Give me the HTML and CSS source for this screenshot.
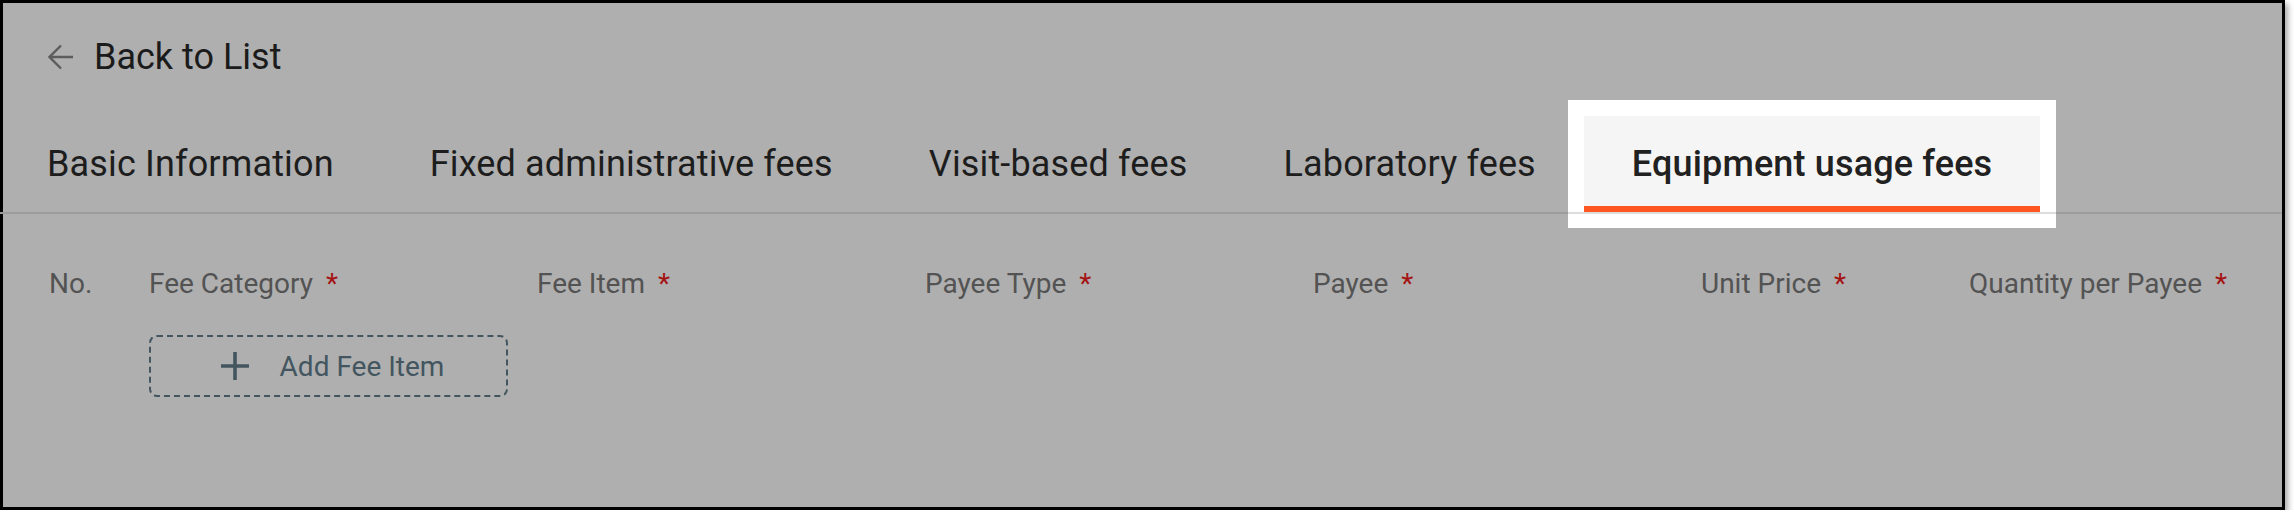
FILE: index.html
```html
<!DOCTYPE html>
<html lang="en"><head><meta charset="utf-8">
    <title>Edit project – Equipment usage fees</title>
    <link rel="stylesheet" href="styles.css">
    </head><body>
    <div class="frame">
        <a class="back-link" href="#">
            <svg class="back-icon" width="26" height="26" viewBox="0 0 26 26" aria-hidden="true">
                <path d="M25 13H2 M13 1.5L1.5 13L13 24.5" fill="none" stroke="currentColor" stroke-width="2.4"/>
            </svg>
            <span>Back to List</span>
        </a>
        <div class="tabs" role="tablist">
            <div class="tab" role="tab">Basic Information</div>
            <div class="tab" role="tab">Fixed administrative fees</div>
            <div class="tab" role="tab">Visit-based fees</div>
            <div class="tab" role="tab">Laboratory fees</div>
            <div class="tab active" role="tab" aria-selected="true">Equipment usage fees</div>
        </div>
        <div class="fee-table">
            <div class="col-label">No.</div>
            <div class="col-label">Fee Category <span class="req">*</span></div>
            <div class="col-label">Fee Item <span class="req">*</span></div>
            <div class="col-label">Payee Type <span class="req">*</span></div>
            <div class="col-label">Payee <span class="req">*</span></div>
            <div class="col-label">Unit Price <span class="req">*</span></div>
            <div class="col-label">Quantity per Payee <span class="req">*</span></div>
            <button class="add-btn" type="button">
                <svg width="28" height="28" viewBox="0 0 28 28" aria-hidden="true">
                    <path d="M14 0V28 M0 14H28" fill="none" stroke="currentColor" stroke-width="3.6"/>
                </svg>
                <span>Add Fee Item</span>
            </button>
        </div>
    </div>
    </body></html>
```

FILE: styles.css
```css
body {
    margin: 0;
    background: #fff;
    font-family: Roboto, "Noto Sans", Arial, sans-serif;
}

/* the whole screen, dimmed, with a thin black frame */
.frame {
    box-sizing: border-box;
    width: 2285px;
    height: 510px;
    border: 3px solid #000;
    background: #afafaf;
    box-shadow: 3px 4px 6px rgba(0,0,0,0.35);
}

.back-link {
    display: flex;
    align-items: center;
    gap: 20px;
    height: 48px;
    padding: 30px 0 0 45px;
    font-size: 36px;
    line-height: 48px;
    color: #1b1b1b;
    text-decoration: none;
}
.back-icon {
    color: #5c5c5c;
}

.tabs {
    display: flex;
    margin: 35px 0 0 -4px;
    border-bottom: 2px solid #9c9c9c;
}
.tab {
    position: relative;
    padding: 28px 48px 22px;
    font-size: 36px;
    line-height: 40px;
    letter-spacing: 0.15px;
    color: #1d1d1d;
    border-bottom: 6px solid transparent;
    white-space: nowrap;
}
/* the highlighted tab is shown undimmed */
.tab.active {
    background: #f5f5f5;
    color: #212121;
    font-weight: 500;
    border-bottom-color: #ff5722;
    box-shadow: 0 0 0 16px #fff;
}
.tab.active::after {
    content: "";
    position: absolute;
    left: -16px;
    right: -16px;
    bottom: -8px;
    height: 2px;
    background: #dddddd;
}

.fee-table {
    display: grid;
    grid-template-columns: 100px 388px 388px 388px 388px 268px auto;
    row-gap: 31px;
    margin-top: 50px;
    padding-left: 46px;
}
.col-label {
    font-size: 28px;
    line-height: 40px;
    color: #535353;
    white-space: nowrap;
}
.req {
    margin-left: 6px;
    color: #a51414;
}

.add-btn {
    grid-column: 2 / span 2;
    display: flex;
    align-items: center;
    justify-content: center;
    gap: 31px;
    box-sizing: border-box;
    width: 359px;
    height: 62px;
    padding: 0 0 0 8px;
    border: 2px dashed #43565f;
    border-radius: 8px;
    background: transparent;
    font-family: inherit;
    font-size: 28px;
    color: #43565f;
    cursor: pointer;
}
```
